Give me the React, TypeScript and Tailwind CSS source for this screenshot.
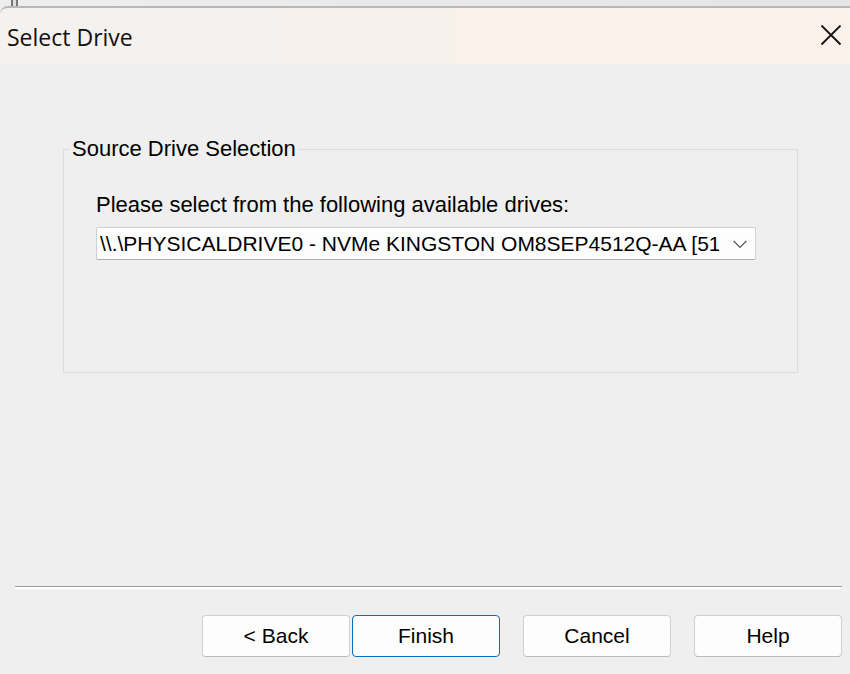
import { useState } from "react";

const drives = ["\\\\.\\PHYSICALDRIVE0 - NVMe KINGSTON OM8SEP4512Q-AA [512GB]"];

const buttonBase =
  "h-[42px] w-[148px] rounded border bg-[#fdfdfd] text-[21px] leading-6 text-black";
const plainButton = "border-[#d0d0d0] border-b-[#b9b9b9]";

function TitleBar() {
  return (
    <div className="bg-[#efefef]">
      <div className="flex h-1.5 bg-linear-to-r from-[#eeeeee] to-[#e5e5e5] pl-[11px]">
        <div className="h-2 w-[7px] border-x-2 border-[#777777] bg-[#dedede]" />
      </div>
      <header className="relative flex h-[58px] items-center justify-between rounded-tl-lg border-t-2 border-[#b8b8b8] bg-linear-to-r from-[#f5f1ee] from-30% to-[#faf1ea] to-60% pl-[7px] pr-1.5">
        <h1 className="pt-0.5 font-['Open_Sans','Noto_Sans',sans-serif] text-[23px] leading-8 text-[#111111]">
          Select Drive
        </h1>
        <button type="button" aria-label="Close" className="p-0.5">
          <svg width="22" height="22" viewBox="0 0 22 22" fill="none" stroke="#111" strokeWidth="1.8">
            <path d="M1.5 .5 20.5 19.5M20.5 .5 1.5 19.5" />
          </svg>
        </button>
      </header>
    </div>
  );
}

export default function App() {
  const [drive, setDrive] = useState(drives[0]);
  return (
    <div className="flex min-h-screen flex-col bg-[#efefef] font-['Liberation_Sans',Arial,sans-serif] text-[21px] leading-6 text-black">
      <TitleBar />
      <main className="flex-1 pt-[74px] pr-[52px] pl-[63px]">
        <fieldset className="h-[235px] border border-[#dcdcdc] pr-[41px] pl-8">
          <legend className="-ml-[26px] px-0.5 text-[22px] leading-[22px]">
            Source Drive Selection
          </legend>
          <label htmlFor="drive" className="mt-[33px] block text-[22px] leading-6">
            Please select from the following available drives:
          </label>
          <div className="relative mt-2.5">
            <select
              id="drive"
              value={drive}
              onChange={(e) => setDrive(e.target.value)}
              className="block h-[33px] w-full appearance-none overflow-hidden rounded-xs border border-[#d0d0d0] border-b-[#b0b0b0] bg-[#fdfdfd] pr-9 pl-[3px] text-clip"
            >
              {drives.map((d) => (
                <option key={d} value={d}>
                  {d}
                </option>
              ))}
            </select>
            <svg
              className="pointer-events-none absolute top-[13px] right-[9px]"
              width="14"
              height="9"
              viewBox="0 0 14 9"
              fill="none"
              stroke="#555"
              strokeWidth="1.2"
            >
              <path d="M.7 1 7 7.3 13.3 1" />
            </svg>
          </div>
        </fieldset>
      </main>
      <footer className="pr-2 pb-[17px] pl-[15px]">
        <hr className="h-[3px] border-t border-[#9b9b9b] bg-white" />
        <div className="mt-[26px] flex justify-end">
          <button type="button" className={`${buttonBase} ${plainButton}`}>
            &lt; Back
          </button>
          <button type="button" className={`${buttonBase} ml-0.5 border-[#0070c8]`}>
            Finish
          </button>
          <button type="button" className={`${buttonBase} ${plainButton} ml-[23px]`}>
            Cancel
          </button>
          <button type="button" className={`${buttonBase} ${plainButton} ml-[23px]`}>
            Help
          </button>
        </div>
      </footer>
    </div>
  );
}
